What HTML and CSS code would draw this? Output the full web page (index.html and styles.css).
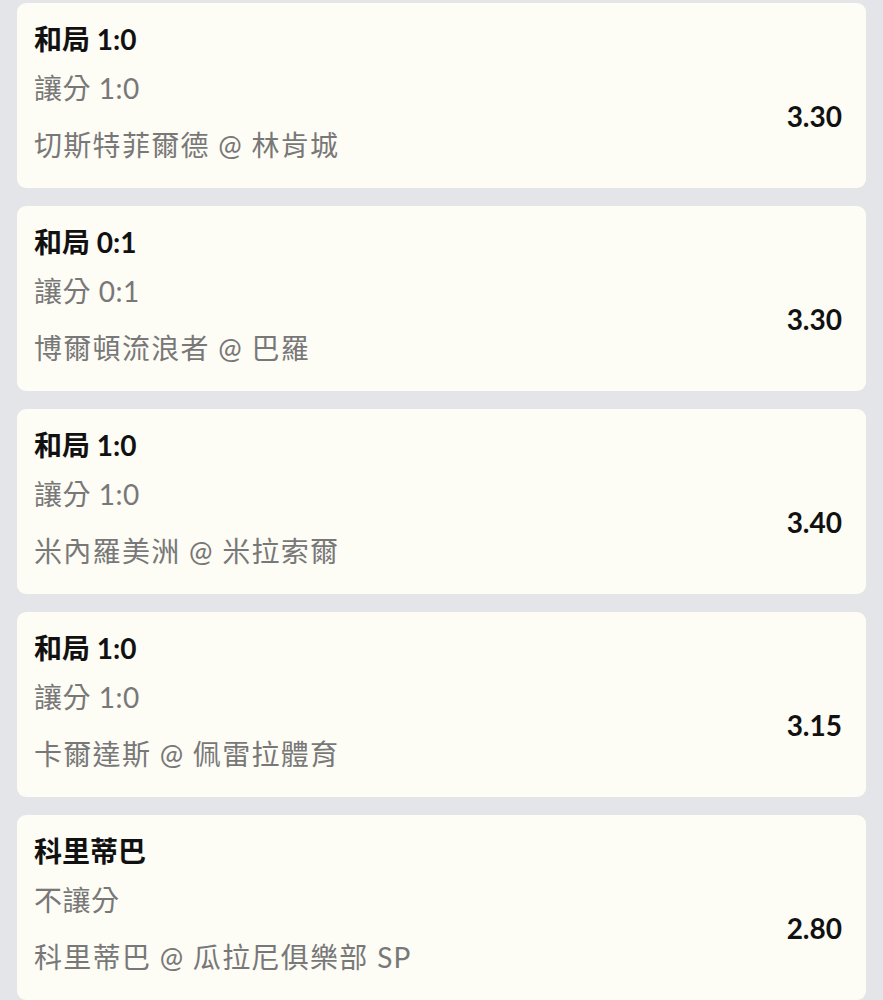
FILE: index.html
```html
<!DOCTYPE html>
<html lang="zh-Hant">
<head>
<meta charset="UTF-8">
<meta name="viewport" content="width=device-width, initial-scale=1.0">
<title>投注</title>
<link rel="stylesheet" href="styles.css">
</head>
<body>
<div class="list">
  <div class="bet">
    <div class="pick">和局 1:0</div>
    <div class="info">
      <div class="market">讓分 1:0</div>
      <div class="match">切斯特菲爾德 @ 林肯城</div>
    </div>
    <div class="odds">3.30</div>
  </div>
  <div class="bet">
    <div class="pick">和局 0:1</div>
    <div class="info">
      <div class="market">讓分 0:1</div>
      <div class="match">博爾頓流浪者 @ 巴羅</div>
    </div>
    <div class="odds">3.30</div>
  </div>
  <div class="bet">
    <div class="pick">和局 1:0</div>
    <div class="info">
      <div class="market">讓分 1:0</div>
      <div class="match">米內羅美洲 @ 米拉索爾</div>
    </div>
    <div class="odds">3.40</div>
  </div>
  <div class="bet">
    <div class="pick">和局 1:0</div>
    <div class="info">
      <div class="market">讓分 1:0</div>
      <div class="match">卡爾達斯 @ 佩雷拉體育</div>
    </div>
    <div class="odds">3.15</div>
  </div>
  <div class="bet">
    <div class="pick">科里蒂巴</div>
    <div class="info">
      <div class="market">不讓分</div>
      <div class="match">科里蒂巴 @ 瓜拉尼俱樂部 SP</div>
    </div>
    <div class="odds">2.80</div>
  </div>
</div>
</body>
</html>
```

FILE: styles.css
```css
body {
  margin: 0;
  padding: 0;
  background-color: #e4e5e9;
  font-family: Lato, "Noto Sans CJK TC", sans-serif;
  color: #111;
}
.list {
  display: flex;
  flex-direction: column;
  gap: 18px;
  padding: 3px 17px 0 17px;
}
.bet {
  display: grid;
  grid-template-columns: 1fr auto;
  background-color: #fdfcf5;
  border-radius: 9px;
  padding: 18px 24px 25px 17px;
  height: 185px;
  box-sizing: border-box;
}
.pick {
  grid-column: 1 / 3;
  font-size: 28px;
  font-weight: bold;
  line-height: 36px;
}
.info {
  color: #787878;
  font-size: 28px;
}
.market {
  line-height: 36px;
  margin-top: 12px;
  letter-spacing: 0.5px;
}
.match {
  line-height: 36px;
  margin-top: 21px;
  letter-spacing: 1.3px;
}
.odds {
  align-self: center;
  font-size: 28px;
  font-weight: bold;
  margin-top: 12px;
}
```
